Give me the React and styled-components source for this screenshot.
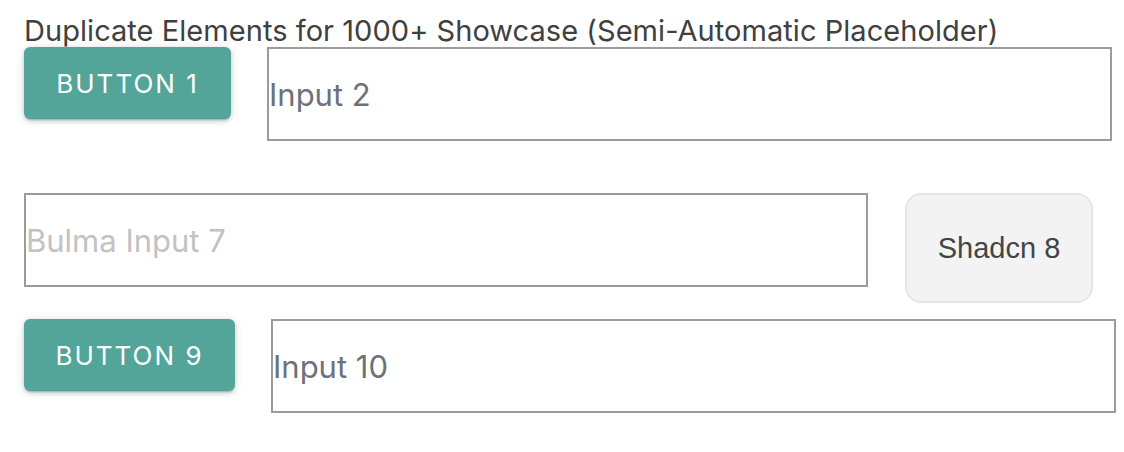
import React from "react";
import styled, { createGlobalStyle } from "styled-components";

const GlobalStyle = createGlobalStyle`
  body {
    margin: 0;
    background: #ffffff;
    font-family: Inter, "Noto Sans", sans-serif;
  }
`;

const Page = styled.div`
  display: flex;
  flex-direction: column;
  padding: 14px 0 0 24px;
`;

const Title = styled.div`
  font-size: 29px;
  line-height: 33px;
  color: #404040;
  letter-spacing: 0.05px;
  white-space: nowrap;
`;

const Row = styled.div`
  display: flex;
  align-items: flex-start;
  gap: ${(p) => p.$gap || 36}px;
  margin-top: ${(p) => p.$top || 0}px;
`;

const MaterialButton = styled.button`
  flex: none;
  width: ${(p) => p.$width}px;
  height: 72px;
  padding: 0;
  border: none;
  border-radius: 6px;
  background: #53a59a;
  color: #ffffff;
  font-family: Inter, "Noto Sans", sans-serif;
  font-size: 26px;
  letter-spacing: 2px;
  text-transform: uppercase;
  box-shadow: 0 3px 2px -2px rgba(0, 0, 0, 0.2), 0 2px 4px 0 rgba(0, 0, 0, 0.14),
    0 1px 10px 0 rgba(0, 0, 0, 0.12);
  cursor: pointer;
`;

const TextInput = styled.input`
  flex: none;
  box-sizing: border-box;
  width: ${(p) => p.$width || 845}px;
  height: 94px;
  padding: 0;
  border: 2px solid #9b9b9b;
  border-radius: 0;
  background: #ffffff;
  font-family: Inter, "Noto Sans", sans-serif;
  font-size: 31px;
  color: #333;
  outline: none;

  &::placeholder {
    color: ${(p) => (p.$light ? "#c2c2c2" : "#6d7179")};
  }
`;

const ShadcnButton = styled.button`
  flex: none;
  box-sizing: border-box;
  width: 188px;
  height: 110px;
  border: 2px solid #e6e6e6;
  border-radius: 16px;
  background: #f3f3f3;
  color: #444444;
  font-family: "Liberation Sans", Arial, sans-serif;
  font-size: 29px;
  cursor: pointer;
`;

export default function App() {
  return (
    <>
      <GlobalStyle />
      <Page>
        <Title>Duplicate Elements for 1000+ Showcase (Semi-Automatic Placeholder)</Title>
        <Row>
          <MaterialButton $width={207}>Button 1</MaterialButton>
          <TextInput placeholder="Input 2" />
        </Row>
        <Row $top={52} $gap={37}>
          <TextInput $light $width={844} placeholder="Bulma Input 7" />
          <ShadcnButton>Shadcn 8</ShadcnButton>
        </Row>
        <Row $top={16}>
          <MaterialButton $width={211}>Button 9</MaterialButton>
          <TextInput placeholder="Input 10" />
        </Row>
      </Page>
    </>
  );
}
